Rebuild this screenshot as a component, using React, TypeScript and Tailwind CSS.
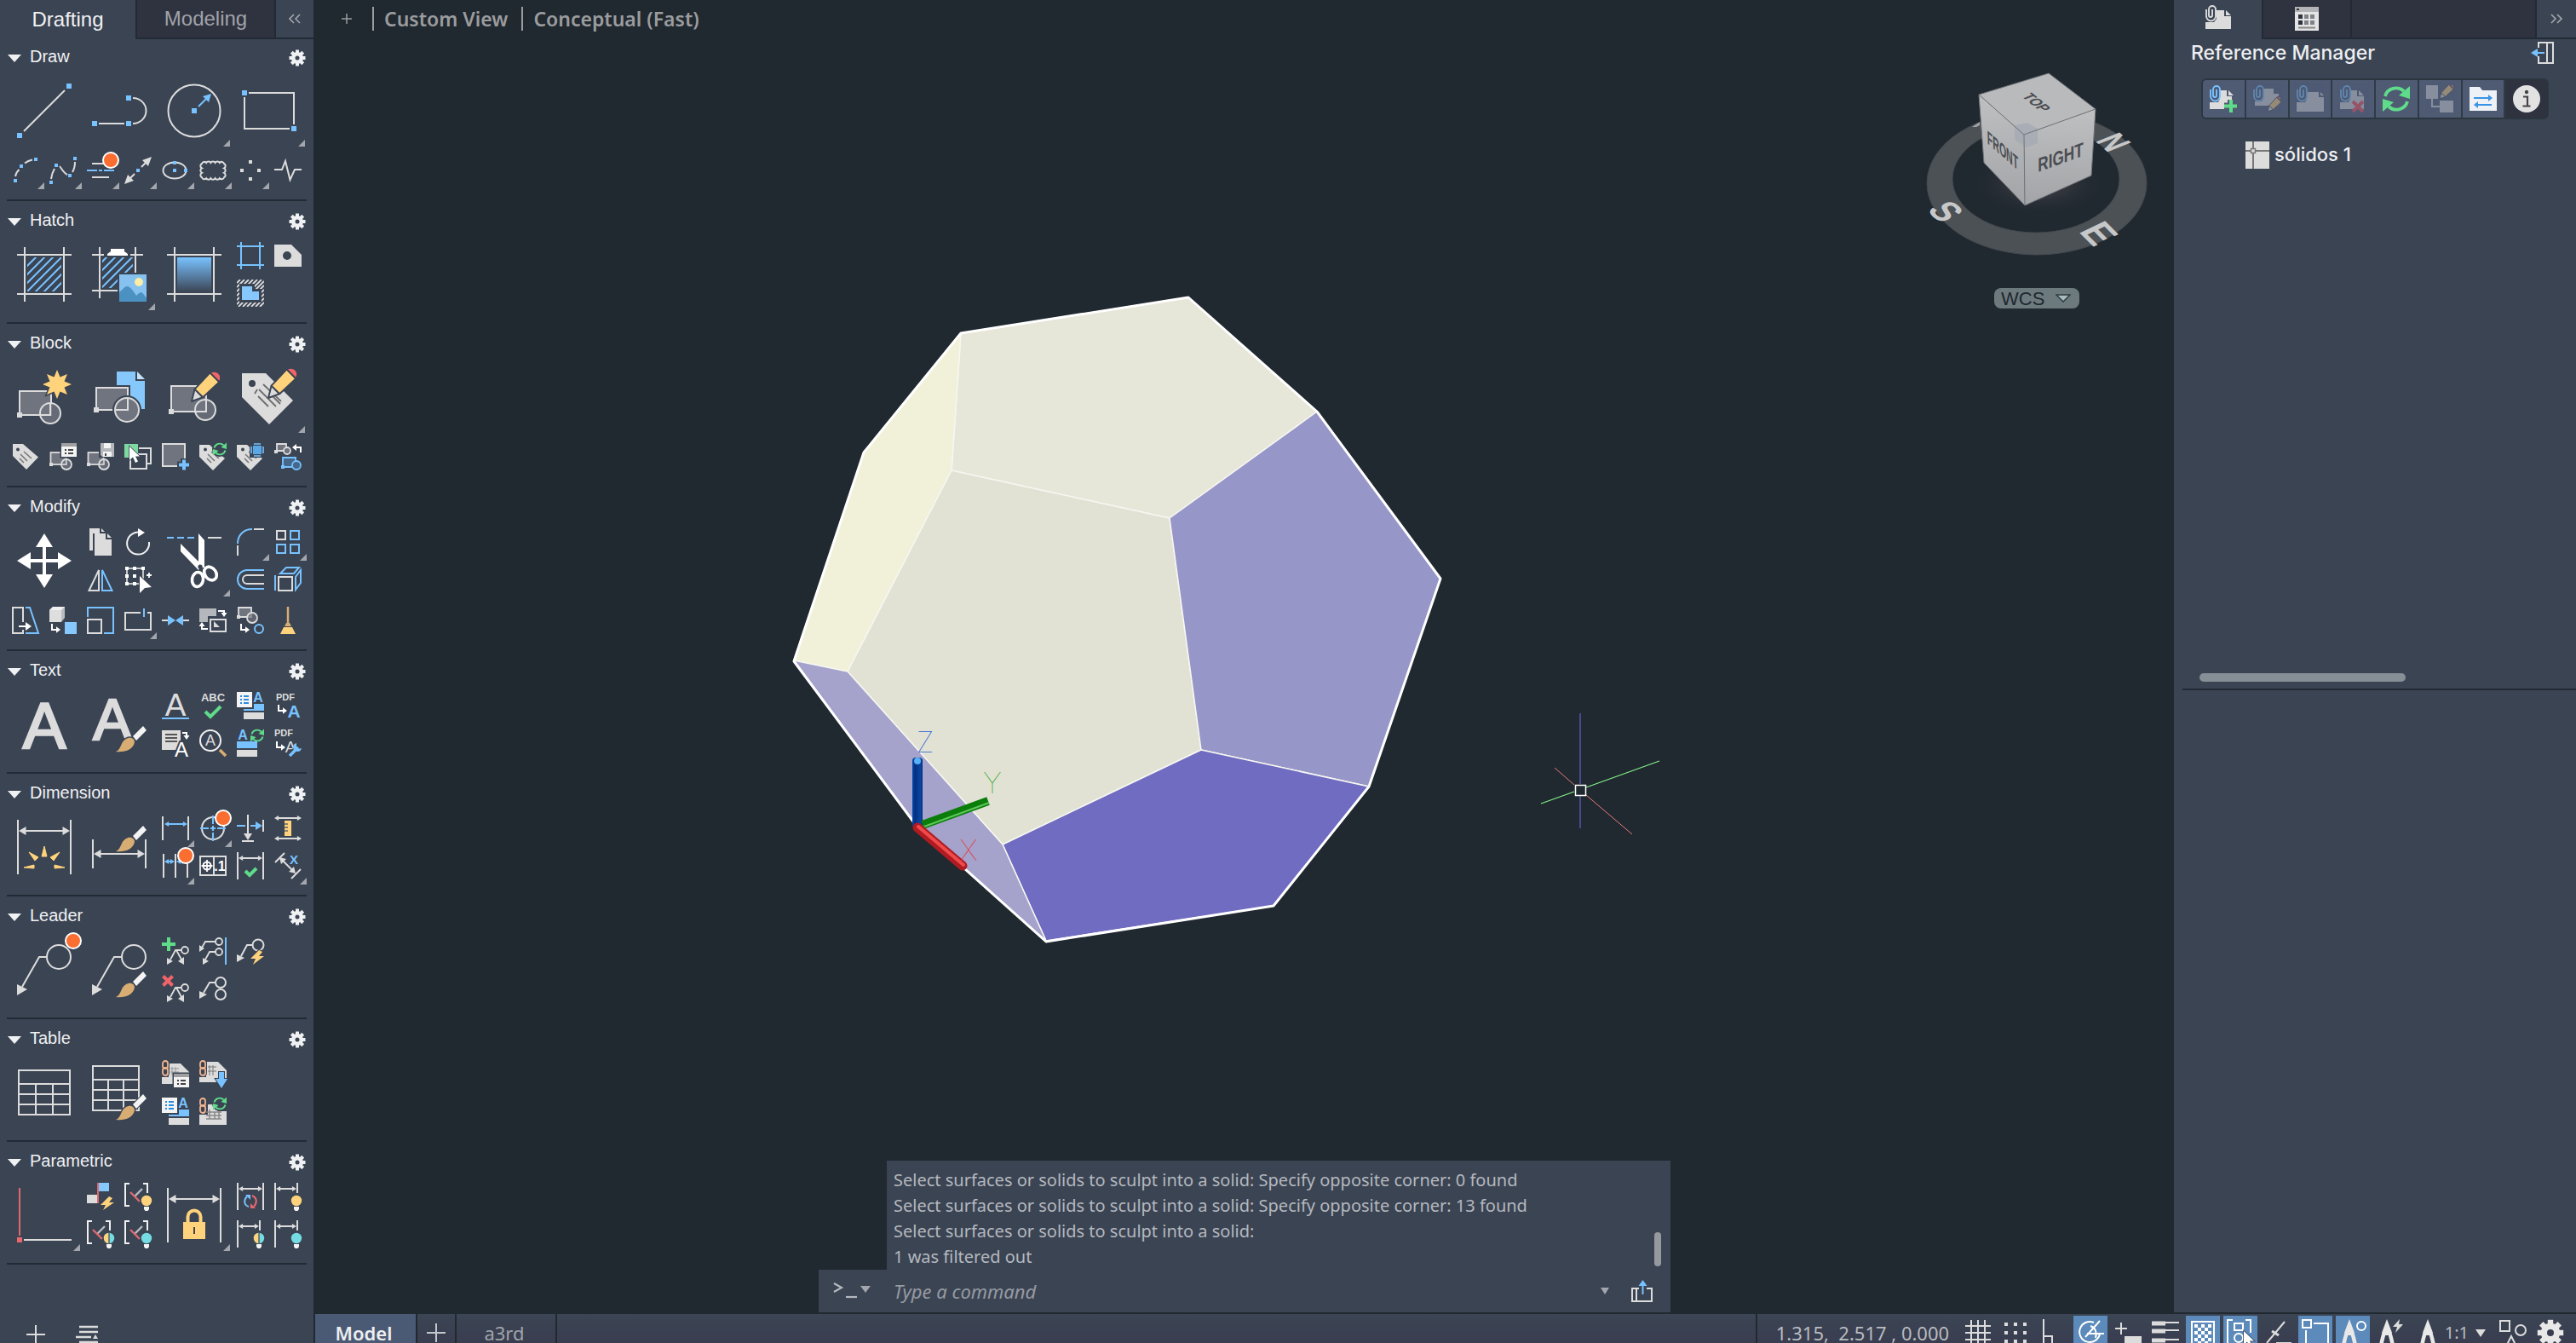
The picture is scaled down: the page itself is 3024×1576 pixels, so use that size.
import type { ReactNode } from "react";

const G = "#dcdcdc";
const B = "#78c2ff";
const BG = "#3b4453";
const FILL = "#70747f";
const YEL = "#ffd37c";
const GRN = "#5fdc8a";
const RED = "#f0646a";
const TAN = "#d7ad73";

type P = { x: number; y: number; s?: number };

/* ---------- shared icon parts ---------- */

function Sq({ x, y, s = 6, c = B }: P & { c?: string }) {
  return <rect x={x - s / 2} y={y - s / 2} width={s} height={s} fill={c} />;
}

function Lines({ d, c = G, w = 2 }: { d: string; c?: string; w?: number }) {
  return <path d={d} fill="none" stroke={c} strokeWidth={w} />;
}

// horizontal dimension arrow with two heads
function Span({ x1, x2, y, c = G, h = 3 }: { x1: number; x2: number; y: number; c?: string; h?: number }) {
  return (
    <g fill={c}>
      <rect x={x1 + h} y={y - 1} width={x2 - x1 - 2 * h} height={2} />
      <path d={`M${x1} ${y}l${h * 1.7} ${-h}v${2 * h}zM${x2} ${y}l${-h * 1.7} ${-h}v${2 * h}z`} />
    </g>
  );
}

function Pencil({ x, y, s = 1 }: P) {
  return (
    <g transform={`translate(${x} ${y}) scale(${s})`} stroke={BG} strokeWidth="1.6" strokeLinejoin="round">
      <path d="M0 0L3-12L11-4z" fill={G} />
      <path d="M3-12L18-28L27-19L11-4z" fill={YEL} />
      <path d="M18-28a6.4 6.4 0 0 1 9 9z" fill={RED} />
    </g>
  );
}

function Brush({ x, y }: P) {
  return (
    <g transform={`translate(${x} ${y})`}>
      <path d="M0 0C7-3 5-11 12-15C18-18 22-15 22-11C20-2 11 1 0 0z" fill={TAN} stroke={BG} strokeWidth="3" paintOrder="stroke" />
      <path d="M20-18L32-30L36-25L24-13z" fill="#f4f4f4" stroke={BG} strokeWidth="2" paintOrder="stroke" />
    </g>
  );
}

function Refresh({ x, y, s = 1, c = GRN }: P & { c?: string }) {
  return (
    <g transform={`translate(${x} ${y}) scale(${s})`}>
      <path d="M-6.5-1.5A6.5 6 0 0 1 4.5-4.5M6.5 1.5A6.5 6 0 0 1-4.5 4.5" fill="none" stroke={c} strokeWidth="1.9" />
      <path d="M8-7.5V0L1.5-2zM-8 7.5V0L-1.5 2z" fill={c} />
    </g>
  );
}

function Tag({ cut = false }: { cut?: boolean }) {
  return (
    <g>
      <path d={cut ? "M0 2H12L30 18L16 32L0 16z" : "M1 1H13L31 16.5L17 31L1 15z"} fill={G} />
      <circle cx="7" cy="7.5" r="2" fill={BG} />
      <path d="M14 10l9 8M10 13l8 8M9 18l5 5" stroke="#777" strokeWidth="1.6" />
    </g>
  );
}

function BlockShape({ x = 0, y = 0, c = G, f = FILL }: { x?: number; y?: number; c?: string; f?: string }) {
  return (
    <g transform={`translate(${x} ${y})`} stroke={c} strokeWidth="1.8" fill={f}>
      <rect x="1.5" y="11" width="18" height="14" />
      <circle cx="20" cy="25" r="6" fillOpacity="0.8" />
      <path d="M20 20v5h-5" fill="none" strokeWidth="1.4" />
      <rect x="0" y="23" width="4" height="4" fill={c} stroke="none" />
    </g>
  );
}

// corner arrow pointing right
function Elbow({ x, y }: P) {
  return (
    <g transform={`translate(${x} ${y})`}>
      <path d="M1 0v7h6" fill="none" stroke="#fff" strokeWidth="2" />
      <path d="M6 3.2l5 3.8l-5 3.8z" fill="#fff" />
    </g>
  );
}

function Letter({ x, y, s, t = "A", c = G, bold = false, edge = 0 }: { x: number; y: number; s: number; t?: string; c?: string; bold?: boolean; edge?: number }) {
  return (
    <text x={x} y={y} fontSize={s} fill={c} textAnchor="middle" fontFamily="Liberation Sans, sans-serif" fontWeight={bold ? 700 : 400} stroke={edge ? BG : "none"} strokeWidth={edge} paintOrder="stroke">
      {t}
    </text>
  );
}

function Check({ d, w = 4 }: { d: string; w?: number }) {
  return <path d={d} fill="none" stroke={GRN} strokeWidth={w} />;
}

function Bulb({ x, y, kind }: P & { kind: "warm" | "cool" | "split" }) {
  return (
    <g transform={`translate(${x} ${y})`}>
      <circle r="7.5" fill={BG} />
      <circle r="6.2" fill={kind === "warm" ? YEL : "#74dce2"} />
      {kind === "split" && <path d="M0-6.2A6.2 6.2 0 0 0 0 6.2z" fill={YEL} />}
      {kind === "split" && <rect x="-.6" y="-6.5" width="1.2" height="13" fill={BG} />}
      <path d="M-3 7h6v3l-1.5 2h-3l-1.5-2z" fill="#f4f4f4" />
    </g>
  );
}

const Bracket = ({ kind }: { kind: "warm" | "cool" | "split" }) => (
  <>
    <Lines d="M6 1H1V27H6M22 1H27V12" c="#f0f0f0" />
    <Lines d="M21 7L12 16" c="#b9bcc2" w={2.4} />
    <Lines d="M7 11L18 22" c="#dc6a70" w={2.4} />
    <Bulb x={26} y={21} kind={kind} />
  </>
);

const Dialog = ({ x, y }: P) => (
  <g transform={`translate(${x} ${y})`}>
    <rect x="-1.5" y="-1.5" width="21" height="19" fill={BG} />
    <rect width="18" height="16" fill="#f4f4f4" />
    <rect width="18" height="4" fill="#a0a0a0" />
    <path d="M4 8h2M8 8h6M4 12h2M8 12h6" stroke="#444" strokeWidth="2" />
  </g>
);

const Chain = () => (
  <g fill="none" stroke="#f2b48e" strokeWidth="1.8">
    <rect x="1" y="1" width="6" height="9" rx="3" />
    <rect x="1" y="9" width="6" height="9" rx="3" />
  </g>
);

const StyleList = () => (
  <>
    <rect width="18" height="18" fill="#f4f4f4" />
    <path d="M4 5h2M8 5h6M4 9h2M8 9h6M4 13h2M8 13h6" stroke="#2a8be0" strokeWidth="2" />
    <Letter x={25} y={12} s={16} c={B} bold />
    <path d="M20 14H32V22H8V20H20z" fill={B} />
    <rect x="8" y="24" width="24" height="8" fill={G} />
  </>
);

const MiniLeader = () => (
  <>
    <circle cx="27" cy="15" r="4" fill="none" stroke={G} strokeWidth="1.8" />
    <Lines d="M23 15H16L10 26M17 15L23 26" w={1.8} />
    <path d="M6 32V24L13 28zM26 32L19 28L26 23z" fill={G} />
  </>
);

const BigLeader = () => (
  <>
    <circle cx="49" cy="17" r="14" fill="none" stroke={G} strokeWidth="2" />
    <Lines d="M35 17H26L6 52" />
    <path d="M0 62V49L12 55z" fill={G} />
  </>
);

const Cursor = ({ x, y, s = 1 }: P) => (
  <path transform={`translate(${x} ${y}) scale(${s})`} d="M0 0V16L4 12.5L7 19L10 17.5L7 11.5H12z" fill="#fff" stroke={BG} strokeWidth="1.5" paintOrder="stroke" />
);

const Frame = ({ far = 55, len = 64 }: { far?: number; len?: number }) => (
  <Lines d={`M9 0V${len}M${far} 0V${len}M0 9H${len}M0 ${far}H${len}`} />
);

/* ---------- tool panels ---------- */

type Tool = { n: string; i: ReactNode; big?: boolean; more?: boolean; dot?: boolean; gap?: boolean };
type Section = { title: string; tools: Tool[]; row?: Tool[] };

const none: Tool = { n: "", i: null, gap: true };

const sections: Section[] = [
  {
    title: "Draw",
    tools: [
      { n: "Line", big: true, i: <><Lines d="M8 56L56 8" /><Sq x={61} y={3} /><Sq x={3} y={61} /></> },
      { n: "Polyline", big: true, i: <><Lines d="M8 47H38M48 17a15.5 15 0 0 1 0 30" /><Sq x={43} y={17} /><Sq x={3} y={47} /><Sq x={43} y={47} /></> },
      { n: "Circle", big: true, more: true, i: <><circle cx="32" cy="32" r="30.5" fill="none" stroke={G} strokeWidth="2" /><Lines d="M37 27L47 17" c={B} /><path d="M52 12L42 15L49 22z" fill={B} /><Sq x={32} y={32} /></> },
      { n: "Rectangle", big: true, more: true, i: <><Lines d="M8 11H61V48M3 16V53H56" /><Sq x={3} y={11} /><Sq x={61} y={53} /></> },
    ],
    row: [
      { n: "Arc", more: true, i: <><Lines d="M4 23Q5 18 8.5 15M15 7.5Q19 4.5 24 3.5" /><Sq x={4} y={28} s={4} /><Sq x={11} y={11} s={4} /><Sq x={28} y={3} s={4} /></> },
      { n: "Spline", more: true, i: <><Lines d="M2 26Q3 19 6 14M12 11C15 15 17 19 21 21M27 18Q30 13 30 6" /><Sq x={2} y={30} s={4} /><Sq x={8} y={10} s={4} /><Sq x={24} y={22} s={4} /><Sq x={30} y={2} s={4} /></> },
      { n: "Multiline", more: true, dot: true, i: <><Lines d="M6 8H22M6 24H26" /><Lines d="M0 16H12M14 16H18M20 16H32" c={B} /></> },
      { n: "Construction line", more: true, i: <><Lines d="M20 12L26 6M12 20L6 26" /><path d="M32 0L21 4L28 11zM0 32L11 28L4 21z" fill={G} /><Sq x={16} y={16} s={4} /></> },
      { n: "Ellipse", more: true, i: <><ellipse cx="15" cy="16" rx="13.5" ry="9.5" fill="none" stroke={G} strokeWidth="2" /><Sq x={15} y={7} s={4} /><Sq x={15} y={16} s={4} /><Sq x={28} y={16} s={4} /></> },
      { n: "Revision cloud", more: true, i: <Lines d="M3 8a3 3 0 0 1 5.2-1a3 3 0 0 1 5.2 0a3 3 0 0 1 5.2 0a3 3 0 0 1 5.2 0a3 3 0 0 1 5.2 1a3 3 0 0 1 0 5.4a3 3 0 0 1 0 5.4a3 3 0 0 1 0 5.4a3 3 0 0 1-5.2 1a3 3 0 0 1-5.2 0a3 3 0 0 1-5.2 0a3 3 0 0 1-5.2 0a3 3 0 0 1-5.2-1a3 3 0 0 1 0-5.4a3 3 0 0 1 0-5.4a3 3 0 0 1 0-5.4z" /> },
      { n: "Multiple points", more: true, i: <><Sq x={16} y={6} s={4} c={G} /><Sq x={6} y={16} s={4} c={G} /><Sq x={26} y={16} s={4} c={G} /><Sq x={16} y={26} s={4} c={G} /></> },
      { n: "Break line", i: <Lines d="M0 15H9L13 5L18.5 27L24 15H32" /> },
    ],
  },
  {
    title: "Hatch",
    tools: [
      {
        n: "Hatch", big: true,
        i: <><clipPath id="h1"><rect x="12" y="12" width="40" height="40" /></clipPath><Frame /><g clipPath="url(#h1)"><Lines c={B} d="M0 34L34 0M0 44L44 0M0 54L54 0M0 64L64 0M10 64L64 10M20 64L64 20M30 64L64 30" /></g></>,
      },
      {
        n: "Pattern from image", big: true, more: true,
        i: <>
          <clipPath id="h2"><rect x="12" y="12" width="36" height="36" /></clipPath>
          <Lines d="M9 0V60M51 0V30M0 9H14M45 9H60M0 51H30" />
          <g clipPath="url(#h2)"><Lines c={B} d="M0 29L29 0M0 39L39 0M0 49L49 0M0 59L59 0M10 59L59 10M20 59L59 20" /></g>
          <path d="M18 10V8L22 5V2H38V5L42 8V10z" fill="#fff" />
          <rect x="30" y="30" width="34" height="34" fill={BG} />
          <rect x="32" y="32" width="32" height="32" fill="#86c1f0" />
          <circle cx="55" cy="41" r="5" fill="#fbeca6" />
          <path d="M32 64V53C36 50 38 46 41 46C45 46 49 52 52 57C54 55 56 53 58 53C60 54 62 57 64 60V64z" fill="#4b92c3" />
        </>,
      },
      {
        n: "Gradient", big: true,
        i: <><linearGradient id="gr" x1="0" y1="0" x2="0" y2="1"><stop offset="0" stopColor={B} /><stop offset="1" stopColor={BG} /></linearGradient><Frame /><rect x="12" y="12" width="40" height="41" fill="url(#gr)" /></>,
      },
      { n: "Boundary", i: <Lines c={B} d="M5 0V32M27 0V32M0 5H32M0 27H32" /> },
      { n: "Wipeout", i: <path fillRule="evenodd" d="M0 3H20L32 15V29H0zM10 16a5 5 0 1 0 10 0a5 5 0 1 0-10 0z" fill={G} /> },
      {
        n: "Region",
        i: <>
          <clipPath id="h3"><rect width="32" height="32" /></clipPath>
          <g clipPath="url(#h3)"><Lines w={1.8} d="M0 4L4 0M0 9L9 0M0 14L14 0M0 19L19 0M0 24L24 0M0 29L29 0M2 32L32 2M7 32L32 7M12 32L32 12M17 32L32 17M22 32L32 22M27 32L32 27" /></g>
          <path d="M6 8H18V14H26V24H6z" fill="#86c8fb" stroke={BG} strokeWidth="6" paintOrder="stroke" />
        </>,
      },
    ],
  },
  {
    title: "Block",
    tools: [
      {
        n: "Create block", big: true,
        i: <>
          <rect x="3" y="25" width="37" height="28" fill={FILL} stroke={G} strokeWidth="2" />
          <circle cx="39" cy="51" r="12" fill={FILL} fillOpacity=".8" stroke={G} strokeWidth="2" />
          <Lines d="M39 39V53H27" /><Sq x={3} y={53} c={G} />
          <path transform="translate(47 17)" d="M0-17L3.5-8.5L12-12L8.5-3.5L17 0L8.5 3.5L12 12L3.5 8.5L0 17L-3.5 8.5L-12 12L-8.5 3.5L-17 0L-8.5-3.5L-12-12L-3.5-8.5z" fill={YEL} stroke={BG} strokeWidth="3" paintOrder="stroke" />
        </>,
      },
      {
        n: "Insert block", big: true,
        i: <>
          <path d="M29 2H51V13H62V46H29z" fill="#86c8fb" /><path d="M53 2L62 11H53z" fill="#c4e3fb" />
          <rect x="5" y="21" width="37" height="26" fill={FILL} stroke={BG} strokeWidth="6" /><rect x="5" y="21" width="37" height="26" fill={FILL} stroke={G} strokeWidth="2" />
          <circle cx="41" cy="47" r="17" fill={BG} /><circle cx="41" cy="47" r="14" fill={FILL} stroke={G} strokeWidth="2" />
          <Lines d="M42 33V47H28" /><Sq x={5} y={47} c={G} />
        </>,
      },
      {
        n: "Edit block", big: true,
        i: <>
          <rect x="5" y="19" width="41" height="30" fill={FILL} stroke={G} strokeWidth="2" />
          <circle cx="45" cy="47" r="12" fill={FILL} fillOpacity=".8" stroke={G} strokeWidth="2" />
          <Lines d="M46 35V49H33" /><Sq x={5} y={49} c={G} /><Pencil x={29} y={37} s={1.2} />
        </>,
      },
      {
        n: "Edit attributes", big: true, more: true,
        i: <>
          <path d="M0 4H28L60 36L32 64L0 32z" fill={G} /><circle cx="12" cy="16" r="4" fill={BG} />
          <path d="M25 17l21 20M20 23l20 20M15 28l3-5M19 31l12 12M35 30l10 10" stroke="#6d6d6d" strokeWidth="1.8" />
          <Pencil x={31} y={33} s={1.2} />
        </>,
      },
    ],
    row: [
      { n: "Define attributes", i: <Tag /> },
      { n: "Block manager", i: <><BlockShape /><Dialog x={14} y={0} /></> },
      { n: "Write block", i: <><BlockShape /><rect x="14" y="-2" width="20" height="19" fill={BG} /><path d="M16 0H32V16H18L16 14z" fill="#b4b7bc" /><rect x="20" y="0" width="8" height="6" fill="#f4f4f4" /><rect x="19" y="10" width="10" height="6" fill="#f4f4f4" /><rect x="21" y="12" width="2" height="3" fill="#444" /></> },
      { n: "Set base point", i: <><rect y="1" width="16" height="16" fill="#7ed9a0" /><path d="M17 6H31V24H27" fill="none" stroke={G} strokeWidth="2" /><rect x="7" y="13" width="19" height="17" fill={BG} stroke={G} strokeWidth="2" /><Cursor x={6} y={4} /></> },
      { n: "New block", i: <><rect x="1" y="1" width="26" height="26" fill={FILL} stroke={G} strokeWidth="2" /><path d="M26 18V33M18 25.5H33" stroke={BG} strokeWidth="8" /><path d="M26 19.5V31.5M20 25.5H32" stroke={B} strokeWidth="4" /></> },
      { n: "Synchronize attributes", i: <><Tag cut /><circle cx="24" cy="7" r="9" fill={BG} /><Refresh x={24} y={7} /></> },
      { n: "Retain attributes", i: <><Tag cut /><rect x="15" y="-1" width="18" height="18" fill={BG} /><rect x="19" y="3" width="10" height="10" fill="#5aa9e6" /><Lines c={B} w={1.6} d="M20 1H28M20 15H28M17 4V12M31 4V12" /></> },
      {
        n: "Replace block",
        i: <>
          <g stroke={G} strokeWidth="1.8" fill={FILL}><path d="M3 1H14V9H3z" /><circle cx="15" cy="9" r="4" /></g><Sq x={2} y={10} s={4} c={G} />
          <path d="M31 11V5H25" fill="none" stroke="#fff" strokeWidth="2" /><path d="M26 1V9L21 5z" fill="#fff" />
          <g stroke={B} strokeWidth="1.8" fill="#44678a"><path d="M10 17H25V28H10z" /><circle cx="26" cy="26" r="5" /></g><Sq x={10} y={28} s={4} />
        </>,
      },
    ],
  },
  {
    title: "Modify",
    tools: [
      { n: "Move", big: true, i: <><Lines d="M32 14V50M14 32H50" c="#fff" w={4} /><path d="M32 0L42 16H22zM32 64L42 48H22zM0 32L16 22V42zM64 32L48 22V42z" fill="#fff" /></> },
      { n: "Copy", i: <><path d="M3 0H15V6H7V26H3z" fill={G} /><path d="M17 0l4 4h-4z" fill={G} /><path d="M9 6H22V13H29V32H9z" fill={G} /><path d="M24 6l5 5h-5z" fill={G} /></> },
      { n: "Rotate", i: <><path d="M20 5.2A13 13 0 1 0 29 16" fill="none" stroke="#f0f0f0" strokeWidth="2" /><path d="M16 0L24 5L16 10z" fill="#fff" /></> },
      {
        n: "Trim", big: true, more: true,
        i: <>
          <Lines c={B} d="M0 5H8M12 5H20M24 5H32" /><Lines d="M48 5H64" />
          <path d="M37 0L44 8V40H37zM16 12L40 36L37 43L16 21z" fill="#fff" />
          <ellipse cx="36" cy="54" rx="6.5" ry="8.5" fill="none" stroke="#fff" strokeWidth="3.6" transform="rotate(8 36 54)" />
          <ellipse cx="51" cy="47" rx="6.5" ry="8.5" fill="none" stroke="#fff" strokeWidth="3.6" transform="rotate(-38 51 47)" />
          <circle cx="39" cy="39" r="2.6" fill={BG} />
        </>,
      },
      { n: "Fillet", more: true, i: <><Lines c={B} d="M1 18C1 8 8 1 18 1" /><Lines d="M20 1H32M1 20V32" /></> },
      { n: "Array", more: true, i: <><Lines d="M3 3H13V13H3z" /><Lines c={B} d="M19 3H29V13H19zM3 19H13V29H3zM19 19H29V29H19z" /></> },
      { n: "Mirror", i: <><Lines d="M14 5V29H2.5z" /><Lines c={B} d="M18 5V29H29.5z" /></> },
      { n: "Stretch", i: <><Lines d="M3 3H22V21H3z" c="#f0f0f0" w={1.5} /><Sq x={3} y={3} s={4} c="#fff" /><Sq x={12} y={3} s={4} c="#fff" /><Sq x={22} y={3} s={4} c="#fff" /><Sq x={3} y={12} s={4} c="#fff" /><Sq x={12} y={12} s={4} c="#fff" /><Sq x={3} y={21} s={4} c="#fff" /><Sq x={12} y={21} s={4} c="#fff" /><path d="M18 12L32 25L24 26L18 32z" fill="#fff" stroke={BG} strokeWidth="2" paintOrder="stroke" /><Lines d="M26 11H32M29 8V14" c="#fff" w={1.8} /></> },
      { n: "Offset", i: <><Lines c={B} d="M32 5H12a11 11 0 0 0 0 22H32" /><Lines d="M32 11H12a5 5 0 0 0 0 10H32" /></> },
      { n: "Extrude", i: <><Lines c={B} d="M1 11V29M7 9L14 2H29L23 9zM25 13L31 5V20L25 28z" /><Lines d="M5 13H21V29H5z" /></> },
    ],
    row: [
      { n: "Taper", i: <><Lines d="M13 18V1H1V31H13V27" /><Lines c={B} d="M16 1H21L31 31H16" /><path d="M8 23H18" stroke="#fff" strokeWidth="2" /><path d="M16 18L23 23L16 28z" fill="#fff" /></> },
      { n: "Move face", i: <><path d="M0 4L4 0H18V13L14 18H0z" fill="#b8bbc0" /><path d="M0 4H14V18H0z" fill="#dedede" /><path d="M0 4L4 0H18L14 4z" fill="#f0f0f0" /><rect x="18" y="18" width="14" height="14" fill="#86c8fb" /><Elbow x={2} y={20} /></> },
      { n: "Scale", i: <><Lines d="M1 15H17V31H1z" /><Lines c={B} d="M1 12V1H31V31H20" /></> },
      { n: "Break", more: true, i: <><Lines d="M19 7H1V27H31V7H27" /><Lines c={B} d="M23 2V12" /></> },
      { n: "Join", i: <><Lines d="M0 16H8M24 16H32" /><path d="M7 10L16 16L7 22zM25 10L16 16L25 22z" fill={B} /></> },
      { n: "Draw order", i: <><path d="M0 2H20V11H10V18H0z" fill="#b4b7bb" /><rect x="13" y="15" width="18" height="14" fill="none" stroke={G} strokeWidth="2" /><path d="M17 17V24H24z" fill={G} /><path d="M22 5H29V8M10 26H3V23" fill="none" stroke="#fff" strokeWidth="2" /><path d="M25.5 7H32.5L29 12zM-.5 23H6.5L3 18z" fill="#fff" /></> },
      { n: "Explode", i: <><g stroke={G} strokeWidth="1.8" fill={FILL}><path d="M2 1H17V12H2z" /><circle cx="18" cy="13" r="6" fillOpacity=".7" /></g><Sq x={2} y={12} s={4} c={G} /><Elbow x={4} y={20} /><circle cx="26" cy="26" r="5" fill="none" stroke={B} strokeWidth="2" /></> },
      { n: "Purge", i: <><path d="M16 0V20" stroke={TAN} strokeWidth="2.5" /><path d="M14 19H18L20 23H12z" fill={TAN} /><path d="M11 24H21L25 32H7z" fill={YEL} /></> },
    ],
  },
  {
    title: "Text",
    tools: [
      { n: "Multiline text", big: true, i: <g stroke={G} strokeWidth="2.5"><text x="32" y="60" fontSize="76" fill={G} textAnchor="middle" fontFamily="Liberation Sans, sans-serif">A</text></g> },
      { n: "Text style", big: true, i: <><g stroke={G} strokeWidth="2.5"><text x="24" y="50" fontSize="68" fill={G} textAnchor="middle" fontFamily="Liberation Sans, sans-serif">A</text></g><Brush x={28} y={64} /></> },
      { n: "Single line text", i: <><Letter x={16} y={28} s={37} /><Lines c={B} d="M0 31H32" /></> },
      { n: "Check spelling", i: <><Letter x={16} y={11} s={13} t="ABC" bold /><Check d="M7 23L13 29L25 17" /></> },
      { n: "Text style list", i: <StyleList /> },
      { n: "PDF text", i: <><Letter x={13} y={10} s={11} t="PDF" bold /><Elbow x={4} y={15} /><Letter x={23} y={30} s={21} c={B} bold /></> },
      { n: "Align text", i: <><rect y="1" width="22" height="23" fill={G} /><path d="M4 6H18M4 10H18M4 14H18" stroke="#555" strokeWidth="2" /><path d="M24 4H29V8" fill="none" stroke="#fff" strokeWidth="2" /><path d="M25.5 7H32.5L29 12z" fill="#fff" /><Letter x={23} y={32} s={24} c="#fff" edge={4} /></> },
      { n: "Find text", i: <><circle cx="13" cy="13" r="12" fill="none" stroke="#f0f0f0" strokeWidth="2" /><Letter x={13} y={19} s={18} /><path d="M24 24L31 31" stroke={TAN} strokeWidth="3.5" /></> },
      { n: "Update text", i: <><Letter x={7} y={12} s={16} c={B} bold /><Refresh x={24} y={7} /><rect y="14" width="24" height="8" fill={B} /><rect y="24" width="24" height="8" fill={G} /></> },
      { n: "PDF recognition", i: <><Letter x={11} y={8} s={11} t="PDF" bold /><Elbow x={2} y={14} /><Letter x={19} y={27} s={19} /><path d="M18 31L27 22" stroke={BG} strokeWidth="7" /><path d="M18 31L28 21" stroke={B} strokeWidth="3.5" /><path d="M26 16a5 5 0 1 0 6 6l-4 1l-2-2z" fill={B} /></> },
    ],
  },
  {
    title: "Dimension",
    tools: [
      { n: "Dimension", big: true, i: <><Lines d="M1 0V64M63 0V64" /><Span x1={2} x2={62} y={13} h={5} /><path d="M32 31L35 43H29zM14 38L25 44L21 48zM50 38L39 44L43 48zM8 56L20 53V57zM56 56L44 53V57z" fill={YEL} stroke={YEL} /></> },
      { n: "Dimension style", big: true, i: <><Lines d="M1 23V57M63 23V57" /><Span x1={2} x2={62} y={40} h={5} /><Brush x={28} y={37} /></> },
      { n: "Linear", more: true, i: <><Lines d="M1 2V30M31 2V30" /><Span x1={3} x2={30} y={11} c={B} /></> },
      { n: "Center mark", more: true, dot: true, i: <><circle cx="16" cy="16" r="13" fill="none" stroke={G} strokeWidth="2" /><Lines c={B} d="M1 16H11M13 16H19M21 16H31M16 1V11M16 13V19M16 21V31" /></> },
      { n: "Ordinate", i: <><Lines d="M13 0V24M6 31H20M31 6V20" /><path d="M8 22H18L13 30z" fill={G} /><Lines c={B} d="M0 13H10M16 13H24" /><path d="M22 8L30 13L22 18z" fill={B} /></> },
      { n: "Dimension break", i: <><Span x1={0} x2={32} y={4} /><Span x1={0} x2={32} y={28} /><rect x="12" y="7" width="8" height="18" fill={YEL} /><path d="M12 11H16M12 15H16M12 19H16" stroke="#666" strokeWidth="1.5" /></> },
      { n: "Baseline", more: true, dot: true, i: <><Lines d="M2 2V30M16 2V30M30 10V30" /><Span x1={3} x2={15} y={11} c={B} /><Span x1={17} x2={29} y={11} c={B} /></> },
      { n: "Tolerance", i: <><Lines d="M1 5H31V27H1zM17 5V27" /><circle cx="9" cy="16" r="4.5" fill="none" stroke="#fff" strokeWidth="2" /><Lines c="#fff" d="M2.5 16H15.5M9 9V23" w={1.8} /><Letter x={24} y={22} s={16} t=".1" c="#fff" bold /></> },
      { n: "Inspect", i: <><Lines d="M1 0V32M31 0V32" /><Span x1={2} x2={30} y={7} /><Check d="M10 22L15 27L23 19" /></> },
      { n: "Dimension text angle", more: true, i: <><Lines d="M1 12L12 1M20 31L31 20M8 8L23 23" /><path d="M6 6L14 8L8 14zM25 25L17 23L23 17z" fill={G} /><Letter x={23} y={14} s={15} t="X" c={B} bold /></> },
    ],
  },
  {
    title: "Leader",
    tools: [
      { n: "Multileader", big: true, dot: true, i: <BigLeader /> },
      { n: "Multileader style", big: true, i: <><BigLeader /><Brush x={28} y={64} /></> },
      { n: "Add leader", i: <><path d="M8 0V16M0 8H16" stroke={GRN} strokeWidth="4" /><MiniLeader /></> },
      { n: "Align leaders", i: <><g fill="none" stroke={G} strokeWidth="1.8"><circle cx="23" cy="5" r="4" /><circle cx="23" cy="17" r="4" /><path d="M19 5H7L3 12M19 17H12L7 26" /></g><path d="M0 17V9L6 13zM4 32V24L11 28z" fill={G} /><Lines c={B} d="M31 0V32" /></> },
      { n: "Quick leader", i: <><circle cx="25" cy="9" r="6.5" fill="none" stroke={G} strokeWidth="2" /><Lines d="M18 9H12L5 22" /><path d="M0 29V20L9 24z" fill={G} /><path d="M26 15L16 25H22L19 32L32 22H26L30 17z" fill={YEL} stroke={BG} strokeWidth="2" paintOrder="stroke" /></> },
      none,
      { n: "Remove leader", i: <><path d="M1.5 1.5L12.5 12.5M12.5 1.5L1.5 12.5" stroke={RED} strokeWidth="4" /><MiniLeader /></> },
      { n: "Collect leaders", i: <><g fill="none" stroke={G} strokeWidth="2"><circle cx="25" cy="9" r="6" /><circle cx="25" cy="23" r="6" /><path d="M19 9H12L5 21" /></g><path d="M0 28V19L9 23z" fill={G} /></> },
    ],
  },
  {
    title: "Table",
    tools: [
      { n: "Table", big: true, i: <Lines d="M2 6H62V58H2zM2 22H62M2 34H62M2 46H62M22 22V58M42 22V58" /> },
      { n: "Table style", big: true, i: <><Lines d="M1 1H55V53H1zM1 17H55M1 29H55M1 41H55M19 17V53M37 17V53" /><Brush x={28} y={64} /></> },
      { n: "Data link manager", i: <><path d="M0 20H8V4H22L32 14V28H0z" fill={G} /><path d="M10 10H20M10 14H20M12 8V18M16 8V18" stroke="#999" /><rect x="-1" y="-1" width="10" height="20" rx="4" fill={BG} /><Chain /><rect x="0" y="28" width="14" height="4" fill={BG} /><Dialog x={14} y={16} /></> },
      { n: "Data link", i: <><path d="M0 20H8V2H22L32 12V26H0z" fill={G} /><path d="M10 8H20M10 13H20M12 6V18M16 6V18" stroke="#777" /><rect x="-1" y="-1" width="10" height="20" rx="4" fill={BG} /><Chain /><path d="M23 14H29V22H33L26 33L19 22H23z" fill={B} stroke={BG} strokeWidth="2" paintOrder="stroke" /></> },
      none,
      none,
      { n: "Table style list", i: <StyleList /> },
      { n: "Update data link", i: <><path d="M0 20H10V8H18L22 16H32V32H0z" fill={G} /><path d="M8 17H26M8 21H26M8 25H26M12 14V25M18 17V25M23 17V25" stroke="#888" strokeWidth="1.5" /><rect x="-1" y="-1" width="10" height="20" rx="4" fill={BG} /><Chain /><circle cx="24" cy="7" r="9" fill={BG} /><Refresh x={24} y={7} /></> },
    ],
  },
  {
    title: "Parametric",
    tools: [
      { n: "Perpendicular", big: true, more: true, i: <><Lines c="#dc6a70" d="M3 0V56" /><Lines d="M8 61H64" /><Sq x={3} y={61} c="#e8686e" /></> },
      { n: "Auto constrain", i: <><rect y="14" width="12" height="10" fill={G} /><rect x="14" width="12" height="10" fill="#86c8fb" /><Lines c="#dc6a70" d="M13 0V24" /><path d="M26 16L16 26H22L19 32L32 23H26L30 18z" fill={YEL} /></> },
      { n: "Show constraints", i: <Bracket kind="warm" /> },
      { n: "Lock dimension", big: true, more: true, i: <><Lines d="M1 0V64M63 0V64" /><Span x1={2} x2={62} y={13} h={5} /><rect x="19" y="40" width="26" height="20" fill={YEL} /><path d="M24.5 41V34a7.5 7.5 0 0 1 15 0V41" fill="none" stroke={YEL} strokeWidth="4" /><path d="M32 46V54" stroke="#444" strokeWidth="2" /></> },
      { n: "Convert dimension", i: <><Lines d="M1 0V32M31 0V32" /><Span x1={2} x2={30} y={7} /><path d="M14 28C8 26 8 20 12 16" fill="none" stroke={B} strokeWidth="2" /><path d="M10 14H16V20z" fill={B} /><path d="M18 15C24 18 24 23 20 28" fill="none" stroke="#e8686e" strokeWidth="2" /><path d="M16 24V30H22z" fill="#e8686e" /></> },
      { n: "Show dimensional", i: <><Lines d="M1 0V32M27 0V12" /><Span x1={2} x2={26} y={7} /><Bulb x={26} y={21} kind="warm" /></> },
      { n: "Toggle constraints", i: <Bracket kind="split" /> },
      { n: "Hide constraints", i: <Bracket kind="cool" /> },
      { n: "Toggle dimensional", i: <><Lines d="M1 0V32M27 0V12" /><Span x1={2} x2={26} y={7} /><Bulb x={26} y={21} kind="split" /></> },
      { n: "Hide dimensional", i: <><Lines d="M1 0V32M27 0V12" /><Span x1={2} x2={26} y={7} /><Bulb x={26} y={21} kind="cool" /></> },
    ],
  },
];

function Gear({ className, hole }: { className: string; hole: string }) {
  return (
    <svg viewBox="-10 -10 20 20" className={className} fill="currentColor">
      <circle r="7" />
      {[0, 45, 90, 135].map((a) => (
        <rect key={a} x="-2" y="-9.5" width="4" height="19" transform={`rotate(${a})`} />
      ))}
      <circle r="2.5" fill={hole} />
    </svg>
  );
}

function ToolButton({ tool }: { tool: Tool }) {
  if (tool.gap) return <span />;
  return (
    <button
      aria-label={tool.n}
      className={`relative flex items-center justify-center ${tool.big ? "col-span-2 row-span-2 h-[88px]" : "h-11"}`}
    >
      <svg viewBox={tool.big ? "0 0 64 64" : "0 0 32 32"} className={`overflow-visible ${tool.big ? "size-16" : "size-8"}`}>
        {tool.i}
      </svg>
      {tool.more && (
        <svg viewBox="0 0 8 8" className={`absolute size-2 ${tool.big ? "right-0.5 bottom-0.5" : "right-0 bottom-0"}`}>
          <path d="M8 0V8H0z" fill="#a3a6ac" />
        </svg>
      )}
      {tool.dot && <span className="absolute top-0 right-0 size-5 rounded-full border-2 border-white bg-[#fa6e32]" />}
    </button>
  );
}

function ToolSection({ section }: { section: Section }) {
  return (
    <section className="mx-2 border-b-2 border-[#222a36] pb-3">
      <header className="flex h-[42px] items-center pt-0.5 pr-px">
        <button aria-label={`Collapse ${section.title}`} className="mr-2.5 ml-px">
          <svg viewBox="0 0 16 9" className="mt-1 h-[9px] w-4"><path d="M0 0H16L8 9z" fill="#f0f1f3" /></svg>
        </button>
        <h2 className="text-xl text-[#f0f1f3]">{section.title}</h2>
        <button aria-label={`${section.title} settings`} className="mt-1 ml-auto text-[#f0f1f3]">
          <Gear className="size-5" hole={BG} />
        </button>
      </header>
      <div className="grid grid-cols-8">
        {section.tools.map((t, i) => <ToolButton key={i} tool={t} />)}
      </div>
      {section.row && (
        <div className="mt-1 grid grid-cols-8">
          {section.row.map((t) => <ToolButton key={t.n} tool={t} />)}
        </div>
      )}
    </section>
  );
}

function Chevrons({ flip = false }: { flip?: boolean }) {
  return (
    <svg viewBox="0 0 14 12" className={`h-3 w-3.5 ${flip ? "rotate-180" : ""}`}>
      <path d="M6 1L1 6L6 11M13 1L8 6L13 11" fill="none" stroke="#a3a6ac" strokeWidth="1.6" />
    </svg>
  );
}

function ToolPalette() {
  return (
    <aside className="flex w-[368px] shrink-0 flex-col overflow-hidden bg-[#3b4453] font-['Liberation_Sans',sans-serif]">
      <div className="flex h-[46px] shrink-0 text-2xl">
        <button className="flex-1 text-[#f0f1f3]">Drafting</button>
        <button className="w-[163px] border-b-2 border-l-2 border-[#222a36] bg-[#2f333f] text-[#a0a2a9]">Modeling</button>
        <button aria-label="Collapse palette" className="flex w-[46px] items-center justify-center border-b-2 border-l-2 border-[#222a36]">
          <Chevrons />
        </button>
      </div>
      <div className="-mt-0.5">
        {sections.map((s) => <ToolSection key={s.title} section={s} />)}
      </div>
      <div className="mt-auto flex h-8 shrink-0 gap-9 pl-[31px]">
        <button aria-label="Add palette">
          <svg viewBox="0 0 22 32" className="h-8 w-[22px]"><path d="M11 11V32M0 22H22" stroke={G} strokeWidth="2" /></svg>
        </button>
        <button aria-label="Palette list">
          <svg viewBox="0 0 28 32" className="h-8 w-7"><path d="M4 13H26M4 19H26M0 25H18M4 31H26" stroke={G} strokeWidth="2.5" /><path d="M20 27L23 22L26 27z" fill={G} /></svg>
        </button>
      </div>
    </aside>
  );
}

/* ---------- drawing area ---------- */

function ModelSpace() {
  return (
    <svg viewBox="370 0 2182 1540" className="absolute inset-0 h-full w-full">
      <defs>
        <linearGradient id="zb"><stop offset="0" stopColor="#0a4ab0" /><stop offset=".25" stopColor="#02307e" /><stop offset=".8" stopColor="#0b46a4" /><stop offset="1" stopColor="#052c70" /></linearGradient>
      </defs>
      <g stroke="#f7f7f2" strokeWidth="1.5" strokeLinejoin="round">
        <path d="M1128 391L1395 349L1546 483L1373 608L1117 552z" fill="#e6e6d9" />
        <path d="M1128 391L1014 531L932 775L995 788L1117 552z" fill="#f1f0d8" />
        <path d="M1117 552L1373 608L1410 880L1177 991L995 788z" fill="#e2e2d4" />
        <path d="M1546 483L1691 679L1607 923L1410 880L1373 608z" fill="#9796c8" />
        <path d="M1410 880L1607 923L1495 1063L1228 1104L1177 991z" fill="#6f6cc1" />
        <path d="M995 788L1177 991L1228 1104L1075 968L932 775z" fill="#a5a3cb" />
      </g>
      <path d="M1128 391L1395 349L1546 483L1691 679L1607 923L1495 1063L1228 1105L1075 968L932 776L1014 531z" fill="none" stroke="#fff" strokeWidth="3" strokeLinejoin="round" />

      {/* UCS icon */}
      <rect x="1071" y="889" width="12" height="82" rx="4" fill="url(#zb)" />
      <circle cx="1077" cy="893" r="4" fill="#58b0f6" />
      <path d="M1083 968L1160 940" stroke="#0a7d0a" strokeWidth="10" />
      <path d="M1085 970L1161 942" stroke="#5fc65a" strokeWidth="2" />
      <path d="M1077 971L1130 1016" stroke="#b01b22" strokeWidth="11" strokeLinecap="round" />
      <path d="M1078 970L1131 1015" stroke="#f04a4a" strokeWidth="4" strokeLinecap="round" />
      <g fontFamily="Inter, sans-serif" fontWeight="100" fontSize="34" textAnchor="middle">
        <text x="1086" y="883" fill="#2d63d6">Z</text>
        <text x="1165" y="931" fill="#3bab30">Y</text>
        <text x="1137" y="1010" fill="#dd3c44">X</text>
      </g>

      {/* crosshair */}
      <g fill="none">
        <path d="M1855 837V920M1855 934V972" stroke="#6f6cf0" />
        <path d="M1809 943L1848 929M1862 924L1948 893" stroke="#85f28a" strokeWidth="1.2" />
        <path d="M1825 901L1848 921M1862 933L1916 979" stroke="#e87d7a" />
        <rect x="1849.5" y="921.5" width="12" height="12" stroke="#fff" strokeWidth="1.5" />
      </g>
    </svg>
  );
}

function ViewCube() {
  return (
    <svg viewBox="0 0 258 224" className="h-56 w-[258px] overflow-visible" fontFamily="Liberation Sans, sans-serif" fontWeight="700" textAnchor="middle">
      <defs>
        <linearGradient id="side" x1="0" y1="0" x2="0" y2="1"><stop offset="0" stopColor="#bfc0c2" /><stop offset="1" stopColor="#a3a4a7" /></linearGradient>
        <radialGradient id="shade"><stop offset=".4" stopColor="#32353c" /><stop offset="1" stopColor="#202830" stopOpacity="0" /></radialGradient>
      </defs>
      <path fillRule="evenodd" d="M0 135a129 84 0 1 0 258 0a129 84 0 1 0-258 0zM30 130a98 63 0 1 0 196 0a98 63 0 1 0-196 0z" fill="#4c5155" stroke="#43484f" />
      <g fill="#c6c7c8" fontSize="32">
        <text transform="matrix(.85 .75 -1.3 .58 22 168)" x="0" y="11">S</text>
        <text transform="matrix(.9 .9 -1.35 .64 202 194)" x="0" y="11">E</text>
        <text transform="matrix(.72 .62 -1.25 .5 219 87)" x="0" y="11">N</text>
      </g>
      <path d="M53 69L62 63V67L58 69z" fill="#a0a2a4" />
      <ellipse cx="132" cy="136" rx="82" ry="38" fill="url(#shade)" />
      <path d="M61 31L143 6L198 48L114 78z" fill="#b9babc" />
      <path d="M61 31L114 78L115 161L67 111z" fill="url(#side)" />
      <path d="M114 78L198 48L193 126L115 161z" fill="url(#side)" />
      <path d="M103 67L118 64L130 71V88L117 93L103 84z" fill="#a3a8b4" fillOpacity=".7" />
      <path d="M61 31L114 78L198 48M114 78L115 161M61 31L143 6L198 48L193 126L115 161L67 111z" fill="none" stroke="#70747a" />
      <g fill="#4b4d52" fontSize="22">
        <text transform="matrix(.53 .42 -.78 .3 129 40)" x="0" y="8">TOP</text>
        <text transform="matrix(.48 .42 .03 1.02 89 96)" x="0" y="8">FRONT</text>
        <text transform="matrix(.78 -.28 0 1.04 157 104)" x="0" y="8">RIGHT</text>
      </g>
    </svg>
  );
}

const history = [
  "Select surfaces or solids to sculpt into a solid: Specify opposite corner: 0 found",
  "Select surfaces or solids to sculpt into a solid: Specify opposite corner: 13 found",
  "Select surfaces or solids to sculpt into a solid:",
  "1 was filtered out",
];

function CommandLine() {
  return (
    <div className="absolute bottom-0 left-1/2 w-[1000px] -translate-x-1/2 text-xl">
      <div className="ml-20 flex justify-between bg-[#3b4453] pt-2 pr-[11px] pl-2">
        <div className="text-[#b4b8bf]">
          {history.map((line) => <p key={line} className="leading-[30px]">{line}</p>)}
        </div>
        <div className="mb-1 h-10 w-2 self-end rounded-full bg-[#96999f]" />
      </div>
      <div className="flex h-[50px] items-center bg-[#3b4453] pr-5 pl-4">
        <button aria-label="Recent commands" className="w-[72px]">
          <svg viewBox="0 0 48 24" className="h-6 w-12">
            <path d="M2 3L11 8L2 13" fill="none" stroke="#b4b8bf" strokeWidth="2.2" />
            <path d="M16 19H29" stroke="#b4b8bf" strokeWidth="2.2" />
            <path d="M33 6H45L39 14z" fill="#a3a6ac" />
          </svg>
        </button>
        <input aria-label="Command" placeholder="Type a command" className="flex-1 bg-transparent text-[22px] italic outline-none placeholder:text-[#969aa2]" />
        <button aria-label="Command history">
          <svg viewBox="0 0 10 8" className="h-2 w-2.5"><path d="M0 0H10L5 8z" fill="#a3a6ac" /></svg>
        </button>
        <button aria-label="Undock" className="ml-6">
          <svg viewBox="0 0 28 28" className="size-7">
            <path d="M11 11H3V26H26V11H20M8 11V26" fill="none" stroke={G} strokeWidth="2" />
            <path d="M15.5 18V6" stroke={B} strokeWidth="2" /><path d="M10.5 8L15.5 1L20.5 8z" fill={B} />
          </svg>
        </button>
      </div>
    </div>
  );
}

function Viewport() {
  return (
    <main className="relative flex-1 overflow-hidden bg-[#202830]">
      <ModelSpace />
      <div className="absolute top-1.5 left-[31px] flex items-center text-[23px] leading-8 font-semibold text-[#9b9c9e]">
        <button aria-label="Viewport controls">
          <svg viewBox="0 0 12 12" className="size-3"><path d="M6 0V12M0 6H12" stroke="#9b9c9e" strokeWidth="1.5" /></svg>
        </button>
        <button className="ml-6 flex items-center gap-3"><span className="h-7 w-0.5 bg-[#9b9c9e]" />Custom View</button>
        <button className="ml-4 flex items-center gap-3"><span className="h-7 w-0.5 bg-[#9b9c9e]" />Conceptual (Fast)</button>
      </div>
      <div className="absolute top-20 right-8 flex flex-col items-center gap-[34px]">
        <ViewCube />
        <button className="flex h-6 w-[100px] items-center justify-between rounded-lg bg-[#6c7a7d] pr-2.5 pl-2 font-['Liberation_Sans',sans-serif] text-[22px] text-[#1f2730]">
          WCS
          <svg viewBox="0 0 18 10" className="h-2.5 w-[18px]"><path d="M1 1H17L9 9z" fill="#a9bcc0" stroke="#303a42" strokeWidth="1.5" /></svg>
        </button>
      </div>
      <CommandLine />
    </main>
  );
}

/* ---------- reference manager ---------- */

function Clip({ c }: { c: string }) {
  return <path d="M9 5V12a2 2 0 0 1-4 0V5a4 4 0 0 1 8 0V13a5.5 5.5 0 0 1-11 0V5" transform="translate(-1 0)" fill="none" stroke={c} strokeWidth="1.9" />;
}

const refTools: { n: string; i: ReactNode; off?: boolean }[] = [
  { n: "Attach reference", i: <><path d="M12 6H20V13H26V28H0V20H10L12 16z" fill={G} /><path d="M22 6l6 6h-6z" fill={G} /><Clip c={B} /><path d="M25 17V32M17 24.5H32" stroke="#4f5a73" strokeWidth="8" /><path d="M25 17V32M17 24.5H32" stroke={GRN} strokeWidth="4" /></> },
  { n: "Edit reference", off: true, i: <><path d="M12 4H24V10H30V24H2V19H10L12 16z" fill={G} /><Clip c={B} /><Pencil x={17} y={31} s={0.6} /></> },
  { n: "Open reference", off: true, i: <><path d="M12 8H26V14H32V31H0V20H10L12 16z" fill={G} /><path d="M28 8l4 4h-4z" fill={G} /><Clip c={B} /></> },
  { n: "Detach reference", off: true, i: <><path d="M12 6H20V13H28V28H0V20H10L12 16z" fill={G} /><path d="M22 6l6 6h-6z" fill={G} /><Clip c={B} /><path d="M15 19L27 31M27 19L15 31" stroke="#ff4d57" strokeWidth="4" /></> },
  { n: "Refresh", i: <Refresh x={16} y={16} s={2} /> },
  { n: "Change path", off: true, i: <><rect width="14" height="16" fill={G} /><rect x="16" y="18" width="16" height="14" fill={G} /><Lines d="M7 16V25H16" /><Pencil x={16} y={16} s={0.6} /></> },
  { n: "Show details", i: <><path d="M0 2H12L15 6H32V30H0z" fill="#eef1f6" /><path d="M5 15H24M8 23H26" stroke="#3a94e6" strokeWidth="2" /><path d="M22 11L27 15L22 19zM10 19L5 23L10 27z" fill="#3a94e6" /></> },
];

function ReferencePanel() {
  return (
    <aside className="mb-0.5 flex w-[472px] shrink-0 flex-col bg-[#3b4453] font-[Inter,sans-serif] text-[#eceef1]">
      <div className="flex h-[46px]">
        <button aria-label="Reference manager" className="flex w-[103px] justify-center pt-1.5">
          <svg viewBox="0 0 32 32" className="h-8 w-8"><path d="M14 6H23V13H31V28H1V20H11L14 16z" fill={G} /><path d="M25 6l6 6h-6z" fill={G} /><g transform="translate(1 0)"><Clip c={G} /></g></svg>
        </button>
        <button aria-label="Properties" className="flex w-[106px] items-center justify-center border-x-2 border-b-2 border-[#222a36] bg-[#2f333f]">
          <svg viewBox="0 0 28 28" className="size-7">
            <rect width="28" height="28" fill="#e4e4e4" /><rect width="28" height="6" fill="#b4b4b8" /><rect x="2" y="2" width="3" height="2" fill="#333" />
            <path d="M4 11.5H9M4 18.5H9" stroke="#2f333f" strokeWidth="5" /><path d="M11 11.5H16M18 11.5H23M11 18.5H16M18 18.5H23" stroke="#7f8187" strokeWidth="5" /><path d="M4 24.5H24" stroke="#888" strokeWidth="2" />
          </svg>
        </button>
        <div className="flex-1 border-b-2 border-[#222a36] bg-[#2f333f]" />
        <button aria-label="Collapse panel" className="flex w-12 items-center justify-center border-b-2 border-l-2 border-[#222a36]">
          <Chevrons flip />
        </button>
      </div>
      <div className="flex h-8 items-center justify-between pr-[25px] pl-5">
        <h2 className="text-[23px] font-medium">Reference Manager</h2>
        <button aria-label="Dock panel">
          <svg viewBox="0 0 28 28" className="size-7"><path d="M9 8V2H26V26H9V18M19 2V26" fill="none" stroke={G} strokeWidth="2" /><path d="M5 14H16" stroke={B} strokeWidth="2" /><path d="M8 9V19L0 14z" fill={B} /></svg>
        </button>
      </div>
      <div className="mx-8 mt-3.5 flex h-12 gap-0.5 overflow-hidden rounded-md border-2 border-[#2b363f] bg-[#2f3b47]">
        {refTools.map((t) => (
          <button key={t.n} aria-label={t.n} disabled={t.off} className="flex flex-1 items-center justify-center bg-[#4f5a73]">
            <svg viewBox="0 0 32 32" className={`size-8 ${t.off ? "opacity-40" : ""}`}>{t.i}</svg>
          </button>
        ))}
        <button aria-label="Information" className="flex flex-1 items-center justify-center bg-[#2f333f]">
          <svg viewBox="0 0 32 32" className="size-8"><circle cx="16" cy="16" r="16" fill="#e2e2e2" /><circle cx="16" cy="8" r="2.2" fill="#444" /><path d="M12 13.5H17V24M11.5 24.5H20.5" fill="none" stroke="#444" strokeWidth="2.2" /></svg>
        </button>
      </div>
      <a href="#file" className="mt-[26px] ml-[84px] flex items-center gap-1.5 text-[22px] leading-8 font-medium">
        <svg viewBox="0 0 28 32" className="h-8 w-7"><rect width="28" height="32" fill={G} /><path d="M9 0V32M0 11H28" stroke="#777" strokeWidth="2" /><rect x="6.5" y="8.5" width="5" height="5" fill={G} stroke="#777" strokeWidth="1.5" /></svg>
        <span className="-mt-0.5">sólidos 1</span>
      </a>
      <div className="mt-[592px] ml-[30px] h-2.5 w-[242px] rounded-full bg-[#868e96]" />
      <div className="mt-2 ml-2.5 h-0.5 bg-[#222a36]" />
    </aside>
  );
}

/* ---------- status bar ---------- */

const compass = (
  <><path d="M16 0L22 16L20 19H12L10 16z" fill="#e8e8e8" /><path d="M12.5 17C11 22 10 25 9 32M19.5 17C21 22 22 25 23 32" fill="none" stroke="#e8e8e8" strokeWidth="4.5" /></>
);

const toggles: { n: string; i: ReactNode; on?: boolean }[] = [
  { n: "Grid", i: <Lines d="M8 1V32M16 1V32M24 1V32M1 8H31M1 16H31M1 24H31" /> },
  { n: "Snap", i: <path d="M3 6H29M3 16H29M3 26H29" stroke={G} strokeWidth="4" strokeDasharray="4 7" /> },
  { n: "Ortho", i: <Lines d="M5 0V32M5 20H15V32" /> },
  { n: "Polar tracking", on: true, i: <><path d="M20 4A12 12 0 1 0 27 17" fill="none" stroke="#fff" strokeWidth="2" /><Lines d="M12 17H32M10 21L27 2M16 8C22 10 24 16 22 22" c="#fff" /></> },
  { n: "Dynamic input", i: <><Lines d="M8 4V18M1 11H15" /><path d="M12 20H32V32H12z" fill={G} /></> },
  { n: "Line weight", i: <><path d="M0 4H32M0 13H32M0 24H32" stroke={G} strokeWidth="2" /><path d="M0 5H16M0 14H16M0 25H16" stroke={G} strokeWidth="5" /></> },
  { n: "Transparency", on: true, i: <><Lines d="M3 3H29V33H3z" c="#fff" /><path d="M6 8H26M6 16H26M6 24H26" stroke="#fff" strokeWidth="4" strokeDasharray="4 4" /><path d="M10 12H26M10 20H26M10 28H26" stroke="#fff" strokeWidth="4" strokeDasharray="4 4" /></> },
  { n: "Selection cycling", on: true, i: <><Lines d="M7 1H1V32M22 1H28V16" c="#fff" /><Lines d="M9 5H19V13H9z" c="#fff" /><circle cx="14" cy="22" r="5" fill="none" stroke="#fff" strokeWidth="2" /><Cursor x={20} y={14} /></> },
  { n: "Angle", i: <><Lines d="M24 3L3 28M14 28H32" /><path d="M9 14l8 5" stroke={G} strokeWidth="3" /></> },
  { n: "Object snap", on: true, i: <Lines d="M1 1H11V10H1zM14 5H31V32M5 13V32" c="#fff" /> },
  { n: "Annotation visibility", on: true, i: <><g transform="translate(-4 0)">{compass}</g><circle cx="26" cy="8" r="5" fill="none" stroke="#fff" strokeWidth="2" /></> },
  { n: "Auto scale", i: <><g transform="translate(-4 0)">{compass}</g><path d="M27 0L19 9H24L22 16L31 6H26z" fill={G} /></> },
  { n: "Annotation scale", i: compass },
];

function StatusBar() {
  return (
    <footer className="ml-0.5 h-[34px] overflow-hidden">
      <div className="flex h-11 gap-0.5 text-[22px] leading-5">
        <button className="w-[118px] bg-[#4b5a74] pr-1 font-semibold text-[#eceef1]">Model</button>
        <button aria-label="New layout" className="flex w-11 items-center justify-center bg-linear-to-b from-[#3b4554] to-[#383b4e]">
          <svg viewBox="0 0 22 22" className="size-[22px]"><path d="M11 0V22M0 11H22" stroke="#c3c6cb" strokeWidth="2" /></svg>
        </button>
        <button className="w-[116px] bg-linear-to-b from-[#3b4554] to-[#383b4e] pr-1 text-[#a0a4ab]">a3rd</button>
        <div className="flex-1 bg-linear-to-b from-[#3b4554] to-[#383b4e]" />
        <div className="flex items-center bg-linear-to-b from-[#3b4554] to-[#383b4e] pr-3.5 text-[#b9bbc0]">
          <span className="w-[239px] pl-[22px] whitespace-pre">1.315,  2.517 , 0.000</span>
          <div className="flex gap-1">
            {toggles.map((t) => (
              <button key={t.n} aria-label={t.n} aria-pressed={!!t.on} className={`flex size-10 items-center justify-center ${t.on ? "bg-[#5b8abb]" : ""}`}>
                <svg viewBox="0 0 32 32" className="size-8 overflow-visible">{t.i}</svg>
              </button>
            ))}
          </div>
          <button className="flex items-center gap-2 text-xl leading-5">
            1:1
            <svg viewBox="0 0 12 9" className="h-[9px] w-3"><path d="M0 0H12L6 9z" fill={G} /></svg>
          </button>
          <button aria-label="Isolate objects" className="ml-4">
            <svg viewBox="0 0 32 32" className="size-8"><path d="M1 2H12V14H1zM14 20L8 32H20z" fill="none" stroke={G} strokeWidth="2" /><circle cx="25" cy="13" r="6" fill="none" stroke={G} strokeWidth="2" /></svg>
          </button>
          <button aria-label="Settings" className="ml-3 text-[#e8e8e8]"><Gear className="size-8" hole="#383d4f" /></button>
        </div>
      </div>
    </footer>
  );
}

export default function App() {
  return (
    <div className="flex h-screen overflow-hidden bg-[#202830] font-['Noto_Sans',sans-serif]">
      <ToolPalette />
      <div className="flex min-w-0 flex-1 flex-col">
        <div className="flex min-h-0 flex-1">
          <div className="mb-0.5 ml-0.5 flex min-w-0 flex-1"><Viewport /></div>
          <ReferencePanel />
        </div>
        <StatusBar />
      </div>
    </div>
  );
}
